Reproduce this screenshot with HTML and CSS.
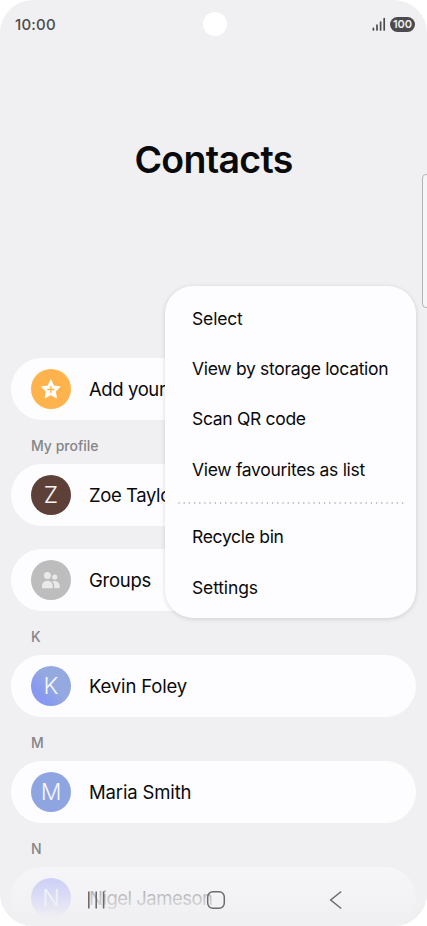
FILE: index.html
```html
<!DOCTYPE html>
<html lang="en">
<head>
<meta charset="utf-8">
<title>Contacts</title>
<link rel="stylesheet" href="styles.css">
</head>
<body>
<div class="phone">
  <header class="status">
    <span class="time">10:00</span>
    <span class="camera"></span>
    <div class="indicators">
      <svg class="signal" width="14" height="15" viewBox="0 0 14 15" fill="none" stroke="#4b4b4d" stroke-width="1.7" stroke-linecap="round"><path d="M1.4 11.3v1.7M5 8.2v4.8M8.6 5v8M12.2 1.5v11.5"/></svg>
      <span class="battery">100</span>
    </div>
  </header>
  <h1 class="title">Contacts</h1>
  <main class="list">
    <div class="card">
      <span class="avatar star"><svg width="40" height="40" viewBox="0 0 40 40"><path d="M19.8 11.2l2.7 5.8 6.2.8-4.6 4.4 1.2 6.3-5.5-3.1-5.5 3.1 1.2-6.3-4.6-4.4 6.2-.8z" fill="#fff" stroke="#fff" stroke-width="1.2" stroke-linejoin="round"/><path d="M19.8 17v7M16.3 20.5h7" stroke="#ffb34c" stroke-width="1.3"/></svg></span>
      <span class="name add">Add your favourite contacts</span>
    </div>
    <h2 class="label">My profile</h2>
    <div class="card">
      <span class="avatar brown">Z</span>
      <span class="name add">Zoe Taylor</span>
    </div>
    <div class="card groups">
      <span class="avatar gray"><svg width="40" height="40" viewBox="0 0 40 40" fill="#e9e9e9"><circle cx="16.4" cy="15.6" r="3.5"/><circle cx="23.8" cy="17" r="2.6"/><path d="M11 28.2v-2.1c0-3.2 2.3-5.3 5.4-5.3s5.4 2.1 5.4 5.3v2.1zM23.2 28.2v-2.3c0-2-.8-3.6-2.1-4.7 4-.8 7.6.7 7.6 4.8v2.2z"/></svg></span>
      <span class="name">Groups</span>
    </div>
    <h2 class="label">K</h2>
    <div class="card">
      <span class="avatar blue kevin">K</span>
      <span class="name wide">Kevin Foley</span>
    </div>
    <h2 class="label">M</h2>
    <div class="card">
      <span class="avatar blue">M</span>
      <span class="name wide">Maria Smith</span>
    </div>
    <h2 class="label">N</h2>
    <div class="card">
      <span class="avatar lilac">N</span>
      <span class="name nigel">Nigel Jameson</span>
    </div>
  </main>
  <nav class="nav">
    <svg width="20" height="20" viewBox="0 0 20 20" stroke="#6b6b6d" stroke-width="1.6"><path d="M2.8 1.5v17M10.2 1.5v17M17.6 1.5v17"/></svg>
    <svg width="20" height="20" viewBox="0 0 20 20" fill="none" stroke="#6b6b6d" stroke-width="1.5"><rect x="1.7" y="1.7" width="16.6" height="16.6" rx="5.2"/></svg>
    <svg width="20" height="20" viewBox="0 0 20 20" fill="none" stroke="#6b6b6d" stroke-width="1.5"><path d="M15.2 1.5L4.7 10l10.5 8.5"/></svg>
  </nav>
  <div class="edge"></div>
  <div class="menu">
    <div class="item roomy">Select</div>
    <div class="item">View by storage location</div>
    <div class="item">Scan QR code</div>
    <div class="item">View favourites as list</div>
    <svg class="divider" width="226" height="2" viewBox="0 0 226 2"><path d="M1 1H225" stroke="#a4a4a8" stroke-width="1.6" stroke-linecap="round" stroke-dasharray="0 5.2"/></svg>
    <div class="item">Recycle bin</div>
    <div class="item roomy">Settings</div>
  </div>
</div>
</body>
</html>
```
FILE: styles.css
```css
* { box-sizing: border-box; }
body { margin: 0; background: #fff; font-family: Inter, "Liberation Sans", sans-serif; color: #0a0a0c; }
.phone { position: relative; width: 427px; height: 926px; overflow: hidden; border-radius: 33px; background: #f0f0f2; }
.status { display: grid; grid-template-columns: 1fr 24px 1fr; align-items: center; height: 48px; padding: 0 12px 0 15px; }
.time { font-size: 15px; font-weight: 500; color: #4b4b4d; letter-spacing: 0.2px; }
.camera { width: 24px; height: 24px; border-radius: 50%; background: #fff; }
.indicators { display: flex; justify-content: flex-end; align-items: center; gap: 4px; }
.battery { width: 25px; height: 15px; border-radius: 8px; background: #4b4b4d; color: #f0f0f2; font-size: 11px; line-height: 15px; font-weight: 600; text-align: center; }
.title { margin: 87px 0 0; height: 48px; line-height: 49px; text-align: center; font-size: 37.5px; font-weight: 600; letter-spacing: -0.7px; color: #0a0a0c; }
.list { padding: 174.5px 11px 0; }
.card { display: flex; align-items: center; height: 62.5px; padding-left: 20px; gap: 18px; border-radius: 31px; background: #fdfdff; }
.groups { margin-top: 22.5px; }
.label { margin: 0; height: 43.5px; padding: 4px 20px 0; font-size: 14px; line-height: 43px; font-weight: 500; color: #858588; }
.name { font-size: 18.5px; white-space: nowrap; letter-spacing: -0.25px; }
.add { letter-spacing: -0.4px; }
.wide { letter-spacing: -0.15px; }
.nigel { letter-spacing: -0.5px; }
.avatar { flex: none; width: 40px; height: 40px; border-radius: 50%; color: #f6f6fb; font-size: 23px; font-weight: 300; line-height: 41px; text-align: center; }
.avatar svg { display: block; }
.star { background: #ffb34c; }
.brown { background: #5d4037; }
.gray { background: #bdbdbd; }
.blue { background: #8fa5e2; }
.kevin { background: linear-gradient(50deg, #8799f0 25%, #94a9e0 55%); }
.lilac { background: #8f98ff; }
.nav { position: absolute; left: 0; right: 0; bottom: 0; height: 60px; padding: 24px 81px 0 86px; display: flex; align-items: flex-start; justify-content: space-between; background: linear-gradient(rgba(240,240,242,.55), rgba(240,240,242,.75) 45%, #f0f0f2 88%); }
.edge { position: absolute; left: 422px; top: 174px; width: 10px; height: 134px; border: 1px solid #b4b4b7; border-radius: 4px; background: #f6f6f8; }
.menu { position: absolute; left: 165px; top: 286px; width: 251px; height: 332px; padding-top: 7px; border-radius: 28px; background: #fdfdff; box-shadow: 0 1px 5px rgba(0,0,0,.14); }
.item { height: 50.3px; padding-left: 27px; display: flex; align-items: center; font-size: 17.5px; letter-spacing: -0.31px; white-space: nowrap; }
.roomy { letter-spacing: -0.15px; }
.divider { display: block; margin: 7.5px 0 8px 13px; }
```
